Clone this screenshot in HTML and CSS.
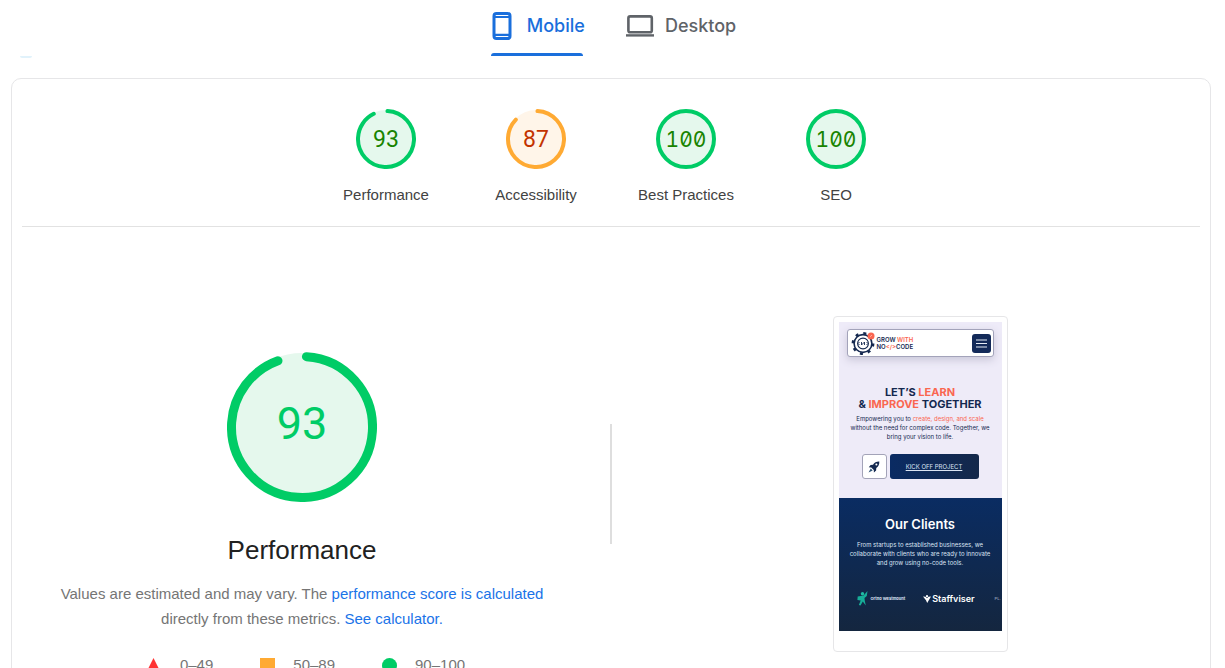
FILE: index.html
```html
<!DOCTYPE html>
<html lang="en">
<head>
<meta charset="utf-8">
<meta name="viewport" content="width=device-width, initial-scale=1">
<title>Performance report</title>
<link rel="stylesheet" href="styles.css">
</head>
<body>
<header class="topbar">
  <span class="speck"></span>
  <nav class="tabs">
    <button class="tab tab-active" type="button">
      <svg class="tab-icon icon-mobile" width="20" height="28" viewBox="0 0 20 28"><rect x="2" y="1.5" width="16" height="25" rx="2.5" fill="none" stroke="currentColor" stroke-width="3"/><path d="M2 5h16M2 22.8h16" stroke="currentColor" stroke-width="2.2"/></svg>
      <span>Mobile</span>
    </button>
    <button class="tab" type="button">
      <svg class="tab-icon" width="28" height="22" viewBox="0 0 28 22"><rect x="2.4" y="1.4" width="23.4" height="15.8" rx="1.8" fill="none" stroke="currentColor" stroke-width="2.6"/><path d="M0 20.4h28" stroke="currentColor" stroke-width="2.4"/></svg>
      <span>Desktop</span>
    </button>
  </nav>
</header>
<main class="card">
  <section class="scores">
    <a class="score pass" href="#performance">
      <span class="gauge"><svg viewBox="0 0 60 60"><circle class="disc" cx="30" cy="30" r="29"/><circle class="arc" cx="30" cy="30" r="28" stroke-dasharray="161.5 200" transform="rotate(-87 30 30)"/></svg><span class="value">93</span></span>
      <span>Performance</span>
    </a>
    <a class="score average" href="#accessibility">
      <span class="gauge"><svg viewBox="0 0 60 60"><circle class="disc" cx="30" cy="30" r="29"/><circle class="arc" cx="30" cy="30" r="28" stroke-dasharray="151.7 200" transform="rotate(-87 30 30)"/></svg><span class="value">87</span></span>
      <span>Accessibility</span>
    </a>
    <a class="score pass" href="#best-practices">
      <span class="gauge"><svg viewBox="0 0 60 60"><circle class="disc" cx="30" cy="30" r="29"/><circle class="arc" cx="30" cy="30" r="28"/></svg><span class="value value-full">100</span></span>
      <span>Best Practices</span>
    </a>
    <a class="score pass" href="#seo">
      <span class="gauge"><svg viewBox="0 0 60 60"><circle class="disc" cx="30" cy="30" r="29"/><circle class="arc" cx="30" cy="30" r="28"/></svg><span class="value value-full">100</span></span>
      <span>SEO</span>
    </a>
  </section>
  <section class="detail" id="performance">
    <div class="summary">
      <div class="gauge gauge-large pass"><svg viewBox="0 0 150 150"><circle class="disc" cx="75" cy="75" r="74"/><circle class="arc" cx="75" cy="75" r="70.5" stroke-dasharray="413.3 500" transform="rotate(-86.4 75 75)"/></svg><span class="value">93</span></div>
      <h1 class="title">Performance</h1>
      <p class="note">Values are estimated and may vary. The <a href="#score">performance score is calculated</a> directly from these metrics. <a href="#calculator">See calculator.</a></p>
      <div class="legend">
        <span class="range"><svg width="15" height="15" viewBox="0 0 15 15"><path d="M6.5 0L13 13H0z" fill="#f33"/></svg>0–49</span>
        <span class="range"><svg width="15" height="15" viewBox="0 0 15 15"><path d="M0 0h15v15H0z" fill="#fa3"/></svg>50–89</span>
        <span class="range"><svg width="15" height="15" viewBox="0 0 15 15"><circle cx="7.5" cy="7.5" r="7.5" fill="#0c6"/></svg>90–100</span>
      </div>
    </div>
    <div class="separator"></div>
    <div class="frame">
      <div class="phone">
        <div class="hero">
          <div class="site-bar">
            <svg width="24" height="24" viewBox="0 0 24 24"><circle cx="12" cy="12.5" r="10.2" fill="none" stroke="#14284f" stroke-width="2.4" stroke-dasharray="3 5.01"/><circle cx="12" cy="12.5" r="8.9" fill="#fff" stroke="#14284f" stroke-width="1.6"/><circle cx="12" cy="12.5" r="5.4" fill="none" stroke="#14284f" stroke-width="1.1"/><path d="M8.500 11l-1.500 1.500 1.500 1.500M10.500 11v3l3-3v3M15.500 11l1.500 1.500-1.500 1.500" fill="none" stroke="#14284f" stroke-width=".9"/><circle cx="20" cy="5" r="3.5" fill="#fa6650"/><path d="M19 5.8l2-1.7" stroke="#ffc0b5" stroke-width=".8"/></svg>
            <div class="site-name">GROW <em>WITH</em><br>NO<em>&lt;/&gt;</em>CODE</div>
            <button class="menu" type="button" aria-label="Menu"><svg width="11" height="9" viewBox="0 0 11 9"><path d="M0 1h11M0 4.5h11M0 8h11" stroke="#e5ebf5" stroke-width="1"/></svg></button>
          </div>
          <h2 class="headline">LET’S <em>LEARN</em><br>&amp; <em>IMPROVE</em> TOGETHER</h2>
          <p class="copy">Empowering you to <em>create, design, and scale</em><br>without the need for complex code. Together, we<br>bring your vision to life.</p>
          <div class="actions">
            <button class="rocket" type="button" aria-label="Launch"><svg width="12" height="12" viewBox="0 0 12 12"><path d="M11.3.6C8.5.5 6.4 1.500 5 3.800L2.600 4 .8 6.300l2.500.1 2.500 2.500.1 2.500 2.200-1.900L8.300 7C10.500 5.700 11.500 3.400 11.300.6z" fill="#14284f"/><circle cx="8.400" cy="3.600" r="1" fill="#fff"/><path d="M2.800 7.500L.5 11.600 4.700 9.400" fill="#2f5577"/></svg></button>
            <a class="kickoff" href="#kickoff">KICK OFF PROJECT</a>
          </div>
        </div>
        <div class="clients">
          <h2 class="clients-title">Our Clients</h2>
          <p class="copy">From startups to established businesses, we<br>collaborate with clients who are ready to innovate<br>and grow using no-code tools.</p>
          <div class="logos">
            <span class="logo ortho"><svg width="11" height="15" viewBox="0 0 11 15"><circle cx="5.500" cy="2.700" r="1.700" fill="#20bba3"/><path d="M10.500 0L9.800 5 7.500 7l.3 3 1 4.500L5.800 10.500 3.500 14.500 1.800 14 3.700 9.500.4 9 .7 5.600 6.500 4.500z" fill="#17ad98"/></svg>Ortho Westmount</span>
            <span class="logo staff"><svg width="8" height="8" viewBox="0 0 8 8"><path d="M0 1.500l2.600.2L4 3.300 5.400 1.700 8 1.500 4.200 8 3 5.200z" fill="#fff"/><circle cx="4" cy="1.200" r="1.100" fill="#fff"/></svg>Staffviser</span>
            <span class="logo clipped">PL.</span>
          </div>
        </div>
      </div>
    </div>
  </section>
</main>
</body>
</html>
```
FILE: styles.css
```css
* { box-sizing: border-box; }
body {
  margin: 0;
  height: 100vh;
  overflow: hidden;
  background: #fff;
  color: #424242;
  font: 15px/20px "Liberation Sans", Arial, sans-serif;
}
button { font: inherit; border: 0; padding: 0; background: none; cursor: pointer; }
a { color: #1a73e8; text-decoration: none; }
h1, h2, p { margin: 0; font-weight: 400; }
em { font-style: normal; color: #fa6650; }
svg { display: block; flex: none; }

.topbar { position: relative; }
.speck {
  position: absolute;
  left: 20px;
  bottom: -2px;
  width: 12px;
  height: 2px;
  border-radius: 0 0 6px 6px;
  background: #e1f2fb;
}
.tabs { display: flex; justify-content: center; gap: 41px; padding-left: 2px; }
.tab {
  display: flex;
  align-items: center;
  gap: 11px;
  height: 56px;
  padding-bottom: 5px;
  color: #5f6368;
  font: 500 18px/24px Inter, sans-serif;
}
.tab-active { gap: 15px; color: #1a6fdc; position: relative; }
.tab-active::after {
  content: "";
  position: absolute;
  left: 0;
  right: 2px;
  bottom: 0;
  height: 3px;
  border-radius: 3px 3px 0 0;
  background: #1a6fdc;
}
.icon-mobile { margin-left: 1px; }

.card {
  margin: 22px 14px 0 11px;
  padding: 0 10px;
  min-height: 100vh;
  border: 1px solid #e6e6e8;
  border-radius: 10px;
}
.scores {
  display: flex;
  justify-content: center;
  padding: 30px 0 21px;
  border-bottom: 1px solid #e2e2e2;
}
.score {
  display: flex;
  flex-direction: column;
  align-items: center;
  gap: 16px;
  width: 150px;
  color: #424242;
}
.gauge { display: grid; width: 60px; height: 60px; }
.gauge > * { grid-area: 1 / 1; }
.disc { fill: #e5f8ed; }
.arc { fill: none; stroke: #0c6; stroke-width: 4; stroke-linecap: round; }
.value {
  place-self: center;
  padding-top: 2px;
  color: #188400;
  font: 23px/30px Roboto, sans-serif;
}
.value-full {
  font-family: Inter, Roboto, sans-serif;
  font-size: 21px;
  font-variant-numeric: slashed-zero tabular-nums;
}
.average .disc { fill: #fff5e9; }
.average .arc { stroke: #fa3; }
.average .value { color: #c33300; }

.detail {
  display: grid;
  grid-template-columns: 1fr 58px 1fr;
  align-items: start;
  justify-items: center;
  padding-top: 89px;
}
.summary {
  display: flex;
  flex-direction: column;
  align-items: center;
  padding-top: 36px;
}
.gauge-large { width: 150px; height: 150px; }
.gauge-large .arc { stroke-width: 9; }
.gauge-large .value { color: #0c6; font-size: 45px; line-height: 50px; padding: 0 0 6px; }
.title { margin-top: 32px; color: #212121; font-size: 26px; line-height: 32px; }
.note { max-width: 500px; margin-top: 15px; color: #757575; line-height: 25px; text-align: center; }
.legend { display: flex; gap: 47px; margin-top: 24px; padding-left: 8px; color: #757575; }
.range { display: flex; align-items: center; gap: 18px; }
.separator { width: 2px; height: 120px; margin-top: 108px; background: #dedede; }

.frame {
  padding: 5px 5px 20px;
  border: 1px solid #e6e6e8;
  border-radius: 4px;
}
.phone { width: 163px; overflow: hidden; font-family: Inter, sans-serif; text-align: center; }
.hero { padding: 7px 8px 19px; background: #eeebf8; color: #14284f; }
.site-bar {
  display: flex;
  align-items: center;
  gap: 2px;
  height: 28px;
  padding: 0 2px 0 3px;
  border: 1px solid #a3a3ba;
  border-radius: 3px;
  background: #fff;
  box-shadow: 0 3px 8px #c9c6d8;
}
.site-name { font-size: 6px; line-height: 7px; font-weight: 600; text-align: left; }
.menu {
  display: grid;
  place-items: center;
  width: 19px;
  height: 19px;
  margin-left: auto;
  border-radius: 3px;
  background: #132a59;
}
.headline { margin-top: 29px; font-size: 11px; line-height: 12px; font-weight: 700; white-space: nowrap; }
.copy { margin: 4px -8px 0; font-size: 6px; line-height: 9px; white-space: nowrap; }
.actions { display: flex; justify-content: center; gap: 3px; margin-top: 13px; }
.rocket {
  display: grid;
  place-items: center;
  width: 25px;
  height: 25px;
  border: 1px solid #a3a3b8;
  border-radius: 3px;
  background: #fff;
}
.kickoff {
  width: 89px;
  border-radius: 3px;
  background: linear-gradient(90deg, #0a2b63, #14284a);
  color: #dbe4f3;
  font-size: 6px;
  line-height: 25px;
  text-decoration: underline;
}
.clients {
  height: 133px;
  padding: 18px 8px 0;
  background: linear-gradient(#0a2c62, #14263f);
  color: #dbe4f3;
}
.clients-title { color: #fff; font-size: 13px; line-height: 16px; font-weight: 600; }
.clients .copy { margin-top: 8px; }
.logos { display: flex; align-items: center; margin: 24px -8px 0 10px; white-space: nowrap; }
.logo { display: flex; align-items: center; gap: 3px; }
.ortho { font-size: 4px; line-height: 15px; font-weight: 700; }
.staff { gap: 1px; margin-left: 18px; color: #fff; font-size: 9px; line-height: 15px; font-weight: 600; }
.clipped { margin-left: 20px; color: #8491aa; font-size: 4px; line-height: 15px; font-weight: 600; }
```
